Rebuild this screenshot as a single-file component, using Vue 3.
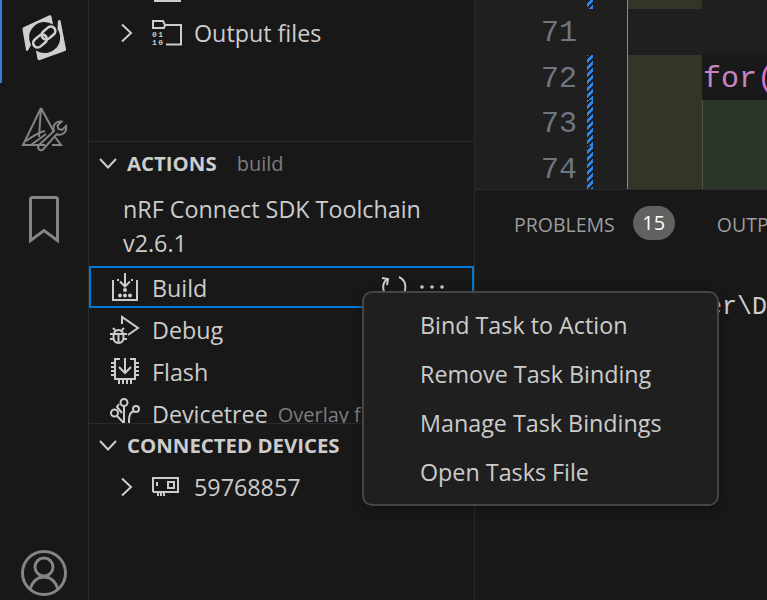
<script setup>
const menu = ['Bind Task to Action', 'Remove Task Binding', 'Manage Task Bindings', 'Open Tasks File']
const lines = [
  { n: 70, dirty: true, ind: true, kind: 'plain' },
  { n: 71, dirty: false, ind: false, kind: 'plain' },
  { n: 72, dirty: true, ind: true, kind: 'for' },
  { n: 73, dirty: true, ind: true, kind: 'green' },
  { n: 74, dirty: true, ind: true, kind: 'green' }
]
</script>

<template>
  <div class="root">
    <nav class="activity">
      <div class="act-item active">
        <svg width="88" height="83" viewBox="0 0 88 83">
          <path class="logo" d="M22.500 29.500Q22 27.500 24 27L49 15.500Q51 14.800 51.500 16.500L53 24.500A15.500 15.500 0 0 0 31 45L28 50.500Q26.500 51.500 26 50Z"/>
          <path class="logo" d="M58 20.500Q59.500 19.500 60.500 20.500L66 49Q66.500 50.500 65 51L40 60Q38 60.500 37.500 59L36 50.500A15.500 15.500 0 0 0 57.500 29Z"/>
          <rect class="link" x="41" y="28.500" width="15" height="9" rx="4.500" transform="rotate(-40 48.500 33)"/>
          <rect class="link" x="32.500" y="36.500" width="15" height="9" rx="4.500" transform="rotate(-40 40 41)"/>
        </svg>
      </div>
      <div class="act-item tool">
        <svg width="88" height="60" viewBox="0 100 88 60">
          <g class="grey">
            <path d="M41 108 23 145h22M41 108l13 24M41 108l-2 29M26 141c7-5 13-9 19-10M31 145l15-11M55 137l6 8h-9"/>
            <path d="M39 145l15-14c-1.500-4 .5-7 2.500-8.500 1.800-1 3.500-1.300 5-1l-4 4 1 3.500 3.500 1 4-4c.7 2.800-.2 5.300-2 7-2.300 1.800-4.500 2.400-7.500 1.300L43 149.500c-1.300 1.300-3 1-4-.1-1-1.200-1.100-3.100 0-4.400z"/>
          </g>
        </svg>
      </div>
      <div class="act-item mark">
        <svg width="88" height="50" viewBox="0 194 88 50">
          <path class="grey thick" d="M30.500 199.500q0-2 2-2h23q2 0 2 2v41L44 230.500 30.500 240.500z"/>
        </svg>
      </div>
      <div class="act-spacer"></div>
      <div class="act-item user">
        <svg width="88" height="50" viewBox="0 548 88 50">
          <g class="grey thick">
            <circle cx="44" cy="573" r="21.500"/>
            <circle cx="44" cy="567" r="9"/>
            <path d="M30 590c2-9 8-13 14-13s12 4 14 13"/>
          </g>
        </svg>
      </div>
    </nav>

    <aside class="sidebar">
      <section class="top-sec">
        <div class="tree-row first">
          <svg class="chev-slot" width="30" height="42"></svg>
          <svg width="30" height="42" viewBox="0 0 30 42"><path class="ic" d="M2 10h8l3 3h15v18H2"/></svg>
        </div>
        <div class="tree-row">
          <svg class="chev" width="14" height="20" viewBox="0 0 14 20"><path class="ic" d="M2 1.500 11 10l-9 8.500"/></svg>
          <svg class="ficon" width="30" height="26" viewBox="0 0 30 26">
            <path class="ic" d="M1 9V1h10l2 4h16v19.500H14M1 8h11l1-3"/>
            <text x="0" y="16.500" class="bits">01</text>
            <text x="0" y="25" class="bits">10</text>
          </svg>
          <span class="label">Output files</span>
        </div>
      </section>

      <section class="actions-sec">
        <header class="sec-head">
          <svg class="sec-chev" width="18" height="11" viewBox="0 0 18 11"><path class="ic" d="M1 1l8 8.500L17 1"/></svg>
          <span class="sec-title">ACTIONS</span>
          <span class="sec-sub">build</span>
        </header>
        <div class="toolchain">nRF Connect SDK Toolchain<br>v2.6.1</div>
        <div class="act-row focus">
          <svg class="ricon" width="28" height="30" viewBox="0 0 28 30">
            <path class="ic" d="M14 1v13M9 9.500l5 5 5-5M2 8v20h24V8M8 8H6M22 8h-2"/>
            <g class="dots"><circle cx="14" cy="18" r="2"/><circle cx="9" cy="23.500" r="2"/><circle cx="14" cy="23.500" r="2"/><circle cx="19" cy="23.500" r="2"/></g>
          </svg>
          <span class="label">Build</span>
          <span class="row-tools">
            <svg width="28" height="26" viewBox="0 0 28 26"><path class="ic" d="M8 5a11 11 0 0 0 2 18M3 4l6 1-1 6M20 3a11 11 0 0 1 0 20"/></svg>
            <svg width="26" height="26" viewBox="0 0 26 26"><g class="dots"><circle cx="3" cy="13" r="1.800"/><circle cx="13" cy="13" r="1.800"/><circle cx="23" cy="13" r="1.800"/></g></svg>
          </span>
        </div>
        <div class="act-row">
          <svg class="ricon" width="30" height="28" viewBox="0 0 30 28">
            <path class="ic" d="M12 9V2l16 11-10 7"/>
            <path class="ic" d="M8.500 15c-4 0-5 3-5 7s2 6 5 6 5-2 5-6-1-7-5-7zM3.500 19H0M13.500 19H17M3.500 24H0M13.500 24H17M5 15l-2-2M12 15l2-2M3.500 19h10M8.500 19v9"/>
          </svg>
          <span class="label">Debug</span>
        </div>
        <div class="act-row">
          <svg class="ricon" width="28" height="28" viewBox="0 0 28 28">
            <path class="ic" d="M9 2H4v20h20V2h-5M0 6h4M0 10h4M0 14h4M0 18h4M24 6h4M24 10h4M24 14h4M24 18h4M8 22v5M12 22v5M16 22v5M20 22v5M14 1v15M8 10l6 6 6-6"/>
          </svg>
          <span class="label">Flash</span>
        </div>
        <div class="act-row clipped">
          <svg class="ricon" width="30" height="30" viewBox="0 0 30 30">
            <circle class="ic" cx="14" cy="4.500" r="3.500"/><circle class="ic" cx="4.500" cy="15" r="3.500"/><circle class="ic" cx="26" cy="11" r="3"/>
            <path class="ic" d="M14 8v22M9 6 7 9l5 6M7 18l6 6v6M24 13c-4 1-5 5-5 9v8"/>
          </svg>
          <span class="label">Devicetree</span>
          <span class="note">Overlay files</span>
        </div>
      </section>

      <section class="devices-sec">
        <header class="sec-head dev">
          <svg class="sec-chev" width="18" height="11" viewBox="0 0 18 11"><path class="ic" d="M1 1l8 8.500L17 1"/></svg>
          <span class="sec-title">CONNECTED DEVICES</span>
        </header>
        <div class="tree-row dev-row">
          <svg class="chev" width="14" height="20" viewBox="0 0 14 20"><path class="ic" d="M2 1.500 11 10l-9 8.500"/></svg>
          <svg class="ficon" width="28" height="20" viewBox="0 0 28 20">
            <path class="ic" d="M1 15V1h25v14H1M6 15v4M9 15v4M12 15v4M5 5v4"/>
            <rect class="ic" x="16" y="5" width="6" height="6"/>
          </svg>
          <span class="label">59768857</span>
        </div>
      </section>
    </aside>

    <main class="right">
      <div class="editor">
        <div v-for="l in lines" :key="l.n" class="line">
          <span class="num">{{ l.n }}</span>
          <span class="dirty" :class="{ on: l.dirty }"></span>
          <span class="guide"></span>
          <span class="indent" :class="{ on: l.ind }"></span>
          <span class="code" :class="l.kind">
            <template v-if="l.kind === 'for'"><span class="kw">for</span><span class="par">(</span></template>
          </span>
        </div>
      </div>
      <div class="panel">
        <div class="tabs">
          <span class="tab">PROBLEMS</span>
          <span class="badge">15</span>
          <span class="tab out">OUTPUT</span>
        </div>
        <div class="term">C:\User\Dev</div>
      </div>
    </main>

    <div class="menu">
      <div v-for="m in menu" :key="m" class="menu-item">{{ m }}</div>
    </div>
  </div>
</template>

<style scoped>
.root {
  position: relative;
  display: flex;
  width: 767px;
  height: 600px;
  overflow: hidden;
  background: #181818;
  color: #cccccc;
  font-family: "Open Sans", "Noto Sans", sans-serif;
  font-size: 23.300px;
}
svg { display: block; flex: none; overflow: visible; }
.ic { fill: none; stroke: #cccccc; stroke-width: 2; }
.dots { fill: #cccccc; }
.bits { font: bold 8px "Liberation Mono", monospace; letter-spacing: 1.500px; fill: #cccccc; }

.activity {
  flex: none;
  width: 88px;
  display: flex;
  flex-direction: column;
  border-right: 1px solid #2b2b2b;
}
.act-item.active { border-left: 2px solid #2f7fd8; margin-bottom: 17px; }
.act-item.active svg { margin-left: -2px; }
.act-item.tool { margin-bottom: 34px; }
.act-spacer { flex: 1; }
.act-item.user { margin-bottom: 2px; }
.logo { fill: #cfcfcf; }
.link { fill: none; stroke: #cfcfcf; stroke-width: 2.600; }
.grey { fill: none; stroke: #858585; stroke-width: 2; }
.thick { stroke-width: 3; }
.grey path, .grey circle { fill: none; }

.sidebar {
  flex: none;
  width: 385px;
  display: flex;
  flex-direction: column;
  border-right: 1px solid #2b2b2b;
}
.top-sec { height: 141px; overflow: hidden; flex: none; }
.tree-row { display: flex; align-items: center; height: 42px; padding-left: 31px; }
.tree-row.first { margin-top: -30px; padding-left: 33px; }
.chev-slot { width: 30px; }
.chev { margin-right: 18px; }
.ficon { margin-right: 12px; }
.label { white-space: nowrap; line-height: 42px; }

.actions-sec {
  height: 281px;
  flex: none;
  overflow: hidden;
  border-top: 1px solid #2b2b2b;
}
.sec-head { display: flex; align-items: center; height: 42px; padding-left: 10px; }
.sec-chev { margin-right: 10px; }
.sec-title { font-weight: 700; font-size: 20.400px; color: #cccccc; white-space: nowrap; }
.sec-sub { margin-left: 20px; font-size: 20px; color: #7d7d7d; }
.toolchain { padding-left: 34px; line-height: 34px; margin-top: 8px; margin-bottom: 6px; }

.act-row {
  display: flex;
  align-items: center;
  height: 42px;
  box-sizing: border-box;
  padding-left: 21px;
}
.act-row .label { padding-top: 2px; }
.act-row.focus { outline: 2px solid #0078d4; outline-offset: -2px; }
.ricon { width: 30px; margin-right: 12px; }
.note { margin-left: 10px; padding-top: 2px; font-size: 20px; color: #7d7d7d; white-space: nowrap; }
.row-tools { margin-left: auto; margin-right: 29px; display: flex; gap: 12px; align-items: center; }

.devices-sec { flex: 1; border-top: 1px solid #2b2b2b; }
.sec-head.dev { height: 42px; }
.dev-row { padding-left: 31px; height: 42px; }
.dev-row .ficon { margin-right: 14px; }

.right { flex: 1; min-width: 0; display: flex; flex-direction: column; }
.editor { height: 189px; flex: none; overflow: hidden; background: #1f1f1f; font-family: "Liberation Mono", monospace; font-size: 30px; }
.line { display: flex; height: 45.500px; line-height: 45.500px; }
.line:first-child { margin-top: -36.500px; }
.num { width: 102px; padding-top: 2px; box-sizing: border-box; text-align: right; color: #6e7681; flex: none; }
.dirty { width: 6px; margin-left: 10px; flex: none; }
.dirty.on { background: repeating-linear-gradient(-45deg, #2b84e6 0 3px, #1f1f1f 3px 5px); }
.guide { width: 1px; margin-left: 34px; background: #8a8a80; flex: none; }
.indent { width: 74px; flex: none; }
.indent.on { background: #343527; }
.code { flex: 1; min-width: 0; padding: 2px 0 0 1px; box-sizing: border-box; white-space: nowrap; }
.code.for { background: #191919; }
.code.green { background: #2b3529; border-left: 1px solid #4b5546; padding-left: 0; }
.kw { color: #c586c0; }
.par { color: #da70d6; }

.panel { flex: 1; border-top: 1px solid #2b2b2b; background: #181818; }
.tabs { display: flex; align-items: center; height: 68px; padding-left: 39px; white-space: nowrap; overflow: hidden; }
.tab { font-size: 19.500px; color: #9d9d9d; }
.badge {
  flex: none;
  width: 42px;
  height: 34px;
  margin: -2px 0 0 18px;
  border-radius: 17px;
  background: #616161;
  color: #ffffff;
  font-size: 20px;
  line-height: 34px;
  text-align: center;
}
.tab.out { margin-left: 42px; }
.term { margin-top: 32px; font: 25px/36px "Liberation Mono", monospace; color: #cccccc; white-space: nowrap; padding-left: 157px; }

.menu {
  position: absolute;
  left: 362px;
  top: 291px;
  width: 357px;
  height: 215px;
  box-sizing: border-box;
  padding: 8px 0 7px;
  background: #1f1f1f;
  border: 2px solid #454545;
  border-radius: 10px;
  box-shadow: 0 2px 8px rgba(0, 0, 0, 0.36);
}
.menu-item { height: 49px; line-height: 49px; padding-left: 56px; white-space: nowrap; color: #cccccc; }
</style>
